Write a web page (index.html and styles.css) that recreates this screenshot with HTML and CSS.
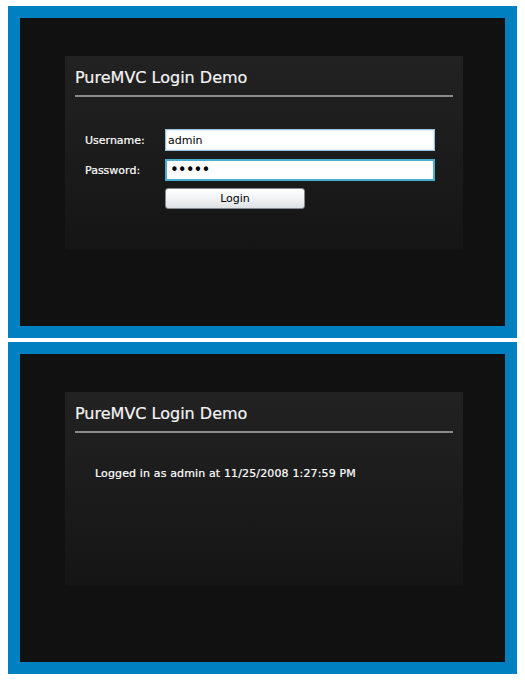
FILE: index.html
```html
<!DOCTYPE html>
<html>
<head>
<meta charset="utf-8">
<link rel="stylesheet" href="styles.css">
</head>
<body>
<div class="stage">
  <section class="panel">
    <div class="card">
      <h1 class="title">PureMVC Login Demo</h1>
      <div class="rule"></div>
      <form class="login">
        <div class="row">
          <label class="label" for="u">Username:</label>
          <input class="field" id="u" type="text" value="admin">
        </div>
        <div class="row">
          <label class="label" for="p">Password:</label>
          <input class="field focused" id="p" type="password" value="admin">
        </div>
        <div class="row">
          <span class="label"></span>
          <button type="button" class="btn">Login</button>
        </div>
      </form>
    </div>
  </section>
  <section class="panel">
    <div class="card">
      <h1 class="title">PureMVC Login Demo</h1>
      <div class="rule"></div>
      <p class="status">Logged in as admin at 11/25/2008 1:27:59 PM</p>
    </div>
  </section>
</div>
</body>
</html>
```

FILE: styles.css
```css
html, body {
  margin: 0;
  padding: 0;
  background: #ffffff;
}
body {
  padding: 6px 8px 0 8px;
  font-family: "DejaVu Sans", Verdana, sans-serif;
}
.stage {
  width: 509px;
  display: flex;
  flex-direction: column;
  gap: 4px;
}
.panel {
  box-sizing: border-box;
  height: 332px;
  border: 12px solid #0080c0;
  background: #111111;
  padding: 38px 0 0 45px;
}
.card {
  box-sizing: border-box;
  width: 398px;
  height: 194px;
  padding: 12px 10px 0 10px;
  background: linear-gradient(#222222, #151515);
}
.title {
  margin: 0;
  font-size: 16px;
  line-height: 20px;
  font-weight: normal;
  color: #f4f4f4;
  -webkit-text-stroke: 0.2px #f4f4f4;
}
.rule {
  height: 2px;
  margin-top: 7px;
  background: #8a8a8a;
}
.login {
  margin: 32px 0 0 10px;
  display: flex;
  flex-direction: column;
  gap: 8px;
}
.row {
  display: flex;
  align-items: center;
}
.row:last-child {
  margin-top: -1px;
}
.label {
  width: 80px;
  font-size: 11px;
  color: #ffffff;
  -webkit-text-stroke: 0.2px #ffffff;
}
.field {
  box-sizing: border-box;
  width: 270px;
  height: 22px;
  margin: 0;
  padding: 0 2px;
  border: 1px solid #9dc4de;
  box-shadow: inset 0 0 0 1px #e4eef5;
  background: #ffffff;
  font-family: "DejaVu Sans", Verdana, sans-serif;
  font-size: 11px;
  color: #000000;
  outline: none;
}
.field.focused {
  border: 2px solid #4aaecf;
  box-shadow: none;
  padding: 0 1px 0 3px;
  font-size: 15px;
  letter-spacing: -1px;
}
.btn {
  box-sizing: border-box;
  width: 140px;
  height: 21px;
  margin: 0;
  padding: 0;
  border: 1px solid #858a90;
  border-radius: 3px;
  background: linear-gradient(#ffffff 0%, #f1f2f4 50%, #dde1e5 100%);
  font-family: "DejaVu Sans", Verdana, sans-serif;
  font-size: 11px;
  color: #000000;
}
.status {
  margin: 34px 0 0 20px;
  font-size: 11px;
  line-height: 13px;
  letter-spacing: 0.14px;
  color: #ffffff;
  -webkit-text-stroke: 0.2px #ffffff;
}
```
